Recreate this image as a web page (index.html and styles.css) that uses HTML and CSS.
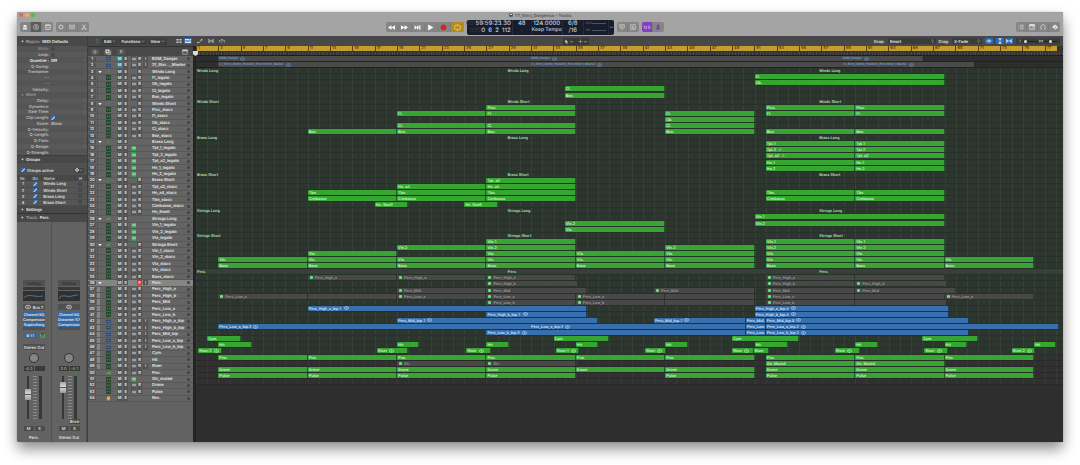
FILE: index.html
```html
<!DOCTYPE html>
<html lang="en">

<head>
    <meta charset="UTF-8">
    <meta name="viewport" content="width=device-width, initial-scale=1.0">
    <title>YT_Story_Dangerous - Tracks</title>
    <link rel="stylesheet" href="styles.css">
</head>

<body>
    <!-- icon set -->
    <svg class="sprite" aria-hidden="true">
        <symbol id="i-library" viewBox="0 0 12 12"><path d="M2 7h8v4H2zM3 2h6v4H3z" fill="currentColor"/></symbol>
        <symbol id="i-info" viewBox="0 0 12 12"><circle cx="6" cy="6" r="5" fill="none" stroke="currentColor"/><path d="M5 5h1.5v4M6 2.5v1" fill="none" stroke="currentColor" stroke-width="1.6"/></symbol>
        <symbol id="i-toolbar" viewBox="0 0 12 12"><path d="M1.5 1.5h9v9h-9zM1.5 3h9" fill="none" stroke="currentColor" stroke-width="1.4"/><path d="M4 6l2 2 2-2" fill="none" stroke="currentColor"/></symbol>
        <symbol id="i-smart" viewBox="0 0 12 12"><circle cx="6" cy="6" r="3.6" fill="none" stroke="currentColor" stroke-width="1.2"/><path d="M6 .5v2M6 9.5v2M.5 6h2M9.5 6h2M2 2l1.4 1.4M8.6 8.6L10 10M10 2L8.6 3.4M2 10l1.4-1.4" stroke="currentColor"/></symbol>
        <symbol id="i-mixer" viewBox="0 0 12 12"><path d="M2 1v10M6 1v10M10 1v10M.5 4h3M4.5 8h3M8.5 4h3" stroke="currentColor" stroke-width="1.2" fill="none"/></symbol>
        <symbol id="i-cut" viewBox="0 0 12 12"><path d="M3 1l5 8M9 1L4 9" stroke="currentColor" fill="none" stroke-width="1.3"/><circle cx="3" cy="10" r="1.5" fill="none" stroke="currentColor"/><circle cx="9" cy="10" r="1.5" fill="none" stroke="currentColor"/></symbol>
        <symbol id="i-rew" viewBox="0 0 12 12"><path d="M6 2v8L0 6zM12 2v8L6 6z" fill="currentColor"/></symbol>
        <symbol id="i-fwd" viewBox="0 0 12 12"><path d="M0 2v8l6-4zM6 2v8l6-4z" fill="currentColor"/></symbol>
        <symbol id="i-end" viewBox="0 0 12 12"><path d="M1 2v8l4-4zM5 2v8l4-4zM9 2h2v8H9z" fill="currentColor"/></symbol>
        <symbol id="i-play" viewBox="0 0 12 12"><path d="M2 1v10l9-5z" fill="currentColor"/></symbol>
        <symbol id="i-rec" viewBox="0 0 12 12"><circle cx="6" cy="6" r="5" fill="#cc2a22"/></symbol>
        <symbol id="i-cycle" viewBox="0 0 12 12"><path d="M7 2H4a3 3 0 0 0-3 3v2a3 3 0 0 0 2 2.8M5 10h3a3 3 0 0 0 3-3V5a3 3 0 0 0-2-2.8M6 .3L8 2 6 4M6 8l-2 2 2 2" fill="none" stroke="currentColor" stroke-width="1.2"/></symbol>
        <symbol id="i-shield" viewBox="0 0 12 12"><path d="M1.5 1.5h9V7L6 11 1.5 7z" fill="none" stroke="currentColor" stroke-width="1.2"/><path d="M4 4l4 3M8 4L4 7" stroke="currentColor"/></symbol>
        <symbol id="i-solo" viewBox="0 0 12 12"><path d="M1.5 1.5h9v9h-9zM5 4v4h3" fill="none" stroke="currentColor" stroke-width="1.2"/></symbol>
        <symbol id="i-count" viewBox="0 0 16 12"><path d="M1 5l2-1v5M5 5h3L5 9h3M10 4h2v5h-2M14 4v5" fill="none" stroke="currentColor" stroke-width="1.3"/></symbol>
        <symbol id="i-metro" viewBox="0 0 12 12"><path d="M4.5 1h3L10 11H2z" fill="currentColor"/><path d="M6 8l5-6" stroke="currentColor"/></symbol>
        <symbol id="i-list" viewBox="0 0 12 12"><path d="M1 2.5h1.5M4 2.5h7.5M1 6h1.5M4 6h7.5M1 9.5h1.5M4 9.5h7.5" stroke="currentColor" stroke-width="1.2"/></symbol>
        <symbol id="i-note" viewBox="0 0 12 12"><path d="M1.5 2.5h9v8h-9z" fill="none" stroke="currentColor" stroke-width="1.4"/><path d="M1 1h10v2.5H1zM6 8l4-4" fill="currentColor" stroke="currentColor"/></symbol>
        <symbol id="i-loop" viewBox="0 0 12 12"><path d="M3 10H1M11 10H9M4 10a4.5 4.5 0 1 1 4 0" fill="none" stroke="currentColor" stroke-width="1.4"/></symbol>
        <symbol id="i-media" viewBox="0 0 12 12"><path d="M1 5l5-4 5 4v4H8v2H5V8H1z" fill="currentColor"/><path d="M7 5v4" stroke="#777"/></symbol>
        <symbol id="i-doc" viewBox="0 0 12 12"><path d="M1 1h10v10H1z" fill="#2d4360"/><path d="M3 3h6v3H3z" fill="#dde6ee"/></symbol>
        <symbol id="i-up" viewBox="0 0 12 12"><path d="M3 5l3-3 3 3M6 2v8h3" fill="none" stroke="currentColor"/></symbol>
        <symbol id="i-grid" viewBox="0 0 12 12"><path d="M1 2h4v2H1zM7 2h4v2H7zM1 5h4v2H1zM7 5h4v2H7zM1 8h4v2H1zM7 8h4v2H7z" fill="currentColor"/></symbol>
        <symbol id="i-regions" viewBox="0 0 12 12"><path d="M0 2h8v2H0zM9 2h3v2H9zM0 5h4v2H0zM5 5h7v2H5zM0 8h12v2H0z" fill="currentColor"/></symbol>
        <symbol id="i-auto" viewBox="0 0 12 12"><path d="M1 9h4l3-5h3" fill="none" stroke="currentColor"/><circle cx="2" cy="9" r="1.5" fill="currentColor"/><circle cx="9" cy="3.5" r="1.5" fill="currentColor"/></symbol>
        <symbol id="i-flex" viewBox="0 0 12 12"><path d="M1 2v8M11 2v8M3 3l6 6M9 3L3 9M3 3v6M9 3v6" fill="none" stroke="currentColor"/></symbol>
        <symbol id="i-catch" viewBox="0 0 12 12"><path d="M1 9V5h3M11 9V5H8M6 10V2M4 4l2-2 2 2" fill="none" stroke="currentColor"/></symbol>
        <symbol id="i-pointer" viewBox="0 0 12 12"><path d="M3 1l7 6H7l2 4-2 1-2-4-2 2z" fill="currentColor"/></symbol>
        <symbol id="i-cross" viewBox="0 0 12 12"><path d="M6 1v10M1 6h10" stroke="currentColor"/></symbol>
        <symbol id="i-chev" viewBox="0 0 12 12"><path d="M3 5l3 3 3-3" fill="none" stroke="currentColor" stroke-width="1.5"/></symbol>
        <symbol id="i-updown" viewBox="0 0 8 12"><path d="M2 5l2-3 2 3M2 7l2 3 2-3" fill="none" stroke="currentColor"/></symbol>
        <symbol id="i-wave" viewBox="0 0 16 12"><path d="M1 6h14M4 4v4M6 2v8M8 1v10M10 2v8M12 4v4" stroke="currentColor" stroke-width="1.3"/></symbol>
        <symbol id="i-vert" viewBox="0 0 12 12"><path d="M3 1h6M3 11h6M6 2v8M4 4l2-2 2 2M4 8l2 2 2-2" fill="none" stroke="currentColor" stroke-width="1.4"/></symbol>
        <symbol id="i-horiz" viewBox="0 0 12 12"><path d="M1 2v8M11 2v8M2 6h8M4 4L2 6l2 2M8 4l2 2-2 2" fill="none" stroke="currentColor" stroke-width="1.4"/></symbol>
        <symbol id="i-dup" viewBox="0 0 12 12"><path d="M1 1h8v8H1z" fill="currentColor"/><path d="M4 11h7V4" fill="none" stroke="currentColor"/><path d="M5 3v4M3 5h4" stroke="#484848"/></symbol>
        <symbol id="i-config" viewBox="0 0 12 12"><path d="M1.5 2h9v8.5h-9z" fill="none" stroke="currentColor"/><path d="M1 1.5h10v3H1z" fill="currentColor"/></symbol>
        <symbol id="i-tri" viewBox="0 0 12 12"><path d="M1 3h10L6 10z" fill="currentColor"/></symbol>
        <symbol id="i-right" viewBox="0 0 12 12"><path d="M3 1l7 5-7 5z" fill="currentColor"/></symbol>
        <symbol id="i-stereo" viewBox="0 0 14 10"><rect x="1" y="1" width="12" height="8" rx="4" fill="none" stroke="currentColor" stroke-width="1.3"/><path d="M7 1v8M4.5 3v4M9.5 3v4" stroke="currentColor"/></symbol>
        <symbol id="i-midi" viewBox="0 0 16 16"><rect width="16" height="16" rx="2" fill="#26402c"/><path d="M4 3v10M12 3v10M5 8h6" stroke="#2f9443" stroke-width="2" fill="none"/></symbol>
        <symbol id="i-audio" viewBox="0 0 18 12"><rect width="18" height="12" rx="3" fill="#29496d"/><path d="M2 6h14M5 4v4M8 2v8M11 2v8M14 4v4" stroke="#4082c8" stroke-width="1.5"/></symbol>
        <symbol id="i-folder" viewBox="0 0 12 12"><path d="M2 11l6-7 2-2-1 4z" fill="#4aa546"/></symbol>
        <symbol id="i-strings" viewBox="0 0 12 12"><path d="M0 7h3V5h3V4h6v6H0z" fill="#47a83e"/></symbol>
        <symbol id="i-aux" viewBox="0 0 12 12"><path d="M3 1h6l1 5-2 5H4L2 6z" fill="#d9b92d"/></symbol>
        <symbol id="i-monitor" viewBox="0 0 12 12"><circle cx="6" cy="6" r="2" fill="currentColor"/><path d="M3 1v10M9 1v10M1 4v4M11 4v4" stroke="currentColor" stroke-width="1.6"/></symbol>
        <symbol id="i-gear" viewBox="0 0 12 12"><circle cx="6" cy="6" r="4" fill="none" stroke="currentColor" stroke-width="3"/></symbol>
    </svg>

    <main class="window">
        <header class="titlebar">
            <div class="caption">
                <div class="lights"><i class="close"></i><i class="min"></i><i class="max"></i></div>
                <h1 class="doc-title"><svg><use href="#i-doc"/></svg>YT_Story_Dangerous - Tracks</h1>
            </div>
            <div class="controlbar">
                <div class="bar-left">
                    <div class="btn-group">
                        <button class="tool" aria-label="Library"><svg><use href="#i-library"/></svg></button>
                        <button class="tool pressed" aria-label="Inspector"><svg><use href="#i-info"/></svg></button>
                        <button class="tool" aria-label="Toolbar"><svg><use href="#i-toolbar"/></svg></button>
                    </div>
                    <div class="btn-group">
                        <button class="tool" aria-label="Smart Controls"><svg><use href="#i-smart"/></svg></button>
                        <button class="tool" aria-label="Mixer"><svg><use href="#i-mixer"/></svg></button>
                        <button class="tool" aria-label="Editors"><svg><use href="#i-cut"/></svg></button>
                    </div>
                </div>
                <div class="bar-center">
                    <div class="btn-group transport">
                        <button class="tool" aria-label="Rewind"><svg><use href="#i-rew"/></svg></button>
                        <button class="tool" aria-label="Forward"><svg><use href="#i-fwd"/></svg></button>
                        <button class="tool" aria-label="Go to End"><svg><use href="#i-end"/></svg></button>
                        <button class="tool" aria-label="Play"><svg><use href="#i-play"/></svg></button>
                        <button class="tool" aria-label="Record"><svg><use href="#i-rec"/></svg></button>
                        <button class="tool cycle" aria-label="Cycle"><svg><use href="#i-cycle"/></svg></button>
                    </div>
                    <div class="lcd">
                        <div class="lcd-cell time"><span><b>00:</b>59:59:23.30</span><span><b>000</b>0&nbsp; 6 &nbsp;2 &nbsp;112</span></div>
                        <div class="lcd-cell"><span>48</span><span class="dim">---</span></div>
                        <div class="lcd-cell tempo"><span>124.0000</span><span class="small">Keep Tempo</span></div>
                        <div class="lcd-cell sign"><span>6/8</span><span>/16</span></div>
                        <div class="lcd-cell meters"><span class="dim">CPU <i></i></span><span class="dim">HD <i></i></span></div>
                        <svg class="lcd-more"><use href="#i-chev"/></svg>
                    </div>
                    <div class="btn-group">
                        <button class="tool" aria-label="Replace"><svg><use href="#i-shield"/></svg></button>
                        <button class="tool" aria-label="Solo"><svg><use href="#i-solo"/></svg></button>
                    </div>
                    <div class="btn-group">
                        <button class="tool purple" aria-label="Count In"><svg><use href="#i-count"/></svg></button>
                        <button class="tool metro" aria-label="Metronome"><svg><use href="#i-metro"/></svg></button>
                    </div>
                </div>
                <div class="bar-right">
                    <div class="btn-group">
                        <button class="tool" aria-label="List Editors"><svg><use href="#i-list"/></svg></button>
                        <button class="tool" aria-label="Note Pads"><svg><use href="#i-note"/></svg></button>
                        <button class="tool" aria-label="Loops"><svg><use href="#i-loop"/></svg></button>
                        <button class="tool" aria-label="Browsers"><svg><use href="#i-media"/></svg></button>
                    </div>
                </div>
            </div>
        </header>

        <div class="workspace">
            <aside class="inspector">
                <h2 class="panel-head tall"><svg><use href="#i-tri"/></svg><span>Region:</span> MIDI Defaults</h2>
                <div class="params">
                    <div class="param off"><label for="mute">Mute:</label><input type="checkbox" id="mute"></div>
                    <div class="param"><label for="loop">Loop:</label><input type="checkbox" id="loop"></div>
                    <div class="param strong"><span>Quantize :</span><b>Off</b><svg><use href="#i-updown"/></svg></div>
                    <div class="param"><span>Q-Swing:</span></div>
                    <div class="param"><span>Transpose:</span><b></b><svg><use href="#i-updown"/></svg></div>
                    <div class="param"><span>- -</span></div>
                    <div class="param"><span>- -</span></div>
                    <div class="param"><span>Velocity:</span></div>
                    <div class="param more"><svg><use href="#i-tri"/></svg>More</div>
                    <div class="param"><span>Delay:</span><b></b><svg><use href="#i-updown"/></svg></div>
                    <div class="param"><span>Dynamics:</span><b></b><svg><use href="#i-updown"/></svg></div>
                    <div class="param"><span>Gate Time:</span><b></b><svg><use href="#i-updown"/></svg></div>
                    <div class="param"><label for="clip">Clip Length:</label><input type="checkbox" id="clip" checked></div>
                    <div class="param"><span>Score:</span><b>Show</b></div>
                    <div class="param"><span>Q-Velocity:</span></div>
                    <div class="param"><span>Q-Length:</span></div>
                    <div class="param"><span>Q-Flam:</span><b></b><svg><use href="#i-updown"/></svg></div>
                    <div class="param"><span>Q-Range:</span><b></b><svg><use href="#i-updown"/></svg></div>
                    <div class="param"><span>Q-Strength:</span></div>
                </div>
                <h2 class="panel-head"><svg><use href="#i-tri"/></svg>Groups</h2>
                <div class="groups-active">
                    <input type="checkbox" id="groups" checked><label for="groups">Groups active</label>
                    <button class="gear" aria-label="Group options"><svg><use href="#i-gear"/></svg><svg><use href="#i-chev"/></svg></button>
                </div>
                <table class="groups">
                    <thead><tr><th>Nr.</th><th>On</th><th class="name">Name</th><th>H</th></tr></thead>
                    <tbody>
                        <tr><td>1</td><td><input type="checkbox" aria-label="Group 1 on" checked></td><td class="name">Winds Long</td><td><input type="checkbox" aria-label="Hide group 1"></td></tr>
                        <tr><td>2</td><td><input type="checkbox" aria-label="Group 2 on" checked></td><td class="name">Winds Short</td><td><input type="checkbox" aria-label="Hide group 2"></td></tr>
                        <tr><td>3</td><td><input type="checkbox" aria-label="Group 3 on" checked></td><td class="name">Brass Long</td><td><input type="checkbox" aria-label="Hide group 3"></td></tr>
                        <tr><td>4</td><td><input type="checkbox" aria-label="Group 4 on" checked></td><td class="name">Brass Short</td><td><input type="checkbox" aria-label="Hide group 4"></td></tr>
                    </tbody>
                </table>
                <h2 class="panel-head"><svg><use href="#i-right"/></svg>Settings</h2>
                <h2 class="panel-head track-head"><svg><use href="#i-right"/></svg><span>Track:</span> Perc.</h2>

                <div class="strips">
                    <section class="strip">
                        <button class="slot setting">Setting</button>
                        <div class="gain"></div>
                        <svg class="eq" viewBox="0 0 22 10" preserveAspectRatio="none"><path d="M1 7L3 5Q7 4 11 5T20 5" fill="none" stroke="#4b7494"/></svg>
                        <button class="slot input"><svg><use href="#i-stereo"/></svg>Bus 7</button>
                        <div class="inserts">
                            <button class="insert">Channel EQ</button>
                            <button class="insert bypass">Compressor</button>
                            <button class="insert">Supercharg</button>
                        </div>
                        <div class="send"><button class="insert">B 11</button><i class="send-knob"></i></div>
                        <button class="slot output">Stereo Out</button>
                        <div class="knob"></div>
                        <div class="readout"><span>-4.0</span><span></span></div>
                        <div class="fader"><input type="range" min="0" max="100" value="60" aria-label="Perc. volume"><i class="scale"></i><i class="meter"></i></div>
                        <div class="bounce"></div>
                        <div class="ms"><button>M</button><button>S</button></div>
                        <h3>Perc.</h3>
                    </section>
                    <section class="strip">
                        <button class="slot setting">Setting</button>
                        <div class="gain"></div>
                        <svg class="eq" viewBox="0 0 22 10" preserveAspectRatio="none"><path d="M1 8L3 5H8Q11 6 14 5T20 4" fill="none" stroke="#4b7494"/></svg>
                        <button class="slot input" aria-label="Input format"><svg><use href="#i-stereo"/></svg></button>
                        <div class="inserts">
                            <button class="insert">Channel EQ</button>
                            <button class="insert">Drawmer S7</button>
                            <button class="insert">Compressor</button>
                        </div>
                        <div class="send"></div>
                        <div class="output"></div>
                        <div class="knob"></div>
                        <div class="readout"><span>0.0</span><span class="peak">-6.2</span></div>
                        <div class="fader"><input type="range" min="0" max="100" value="80" aria-label="Stereo Out volume"><i class="scale"></i><i class="meter"></i></div>
                        <div class="bounce"><button>Bnce</button></div>
                        <div class="ms"><button>M</button><button>S</button></div>
                        <h3>Stereo Out</h3>
                    </section>
                </div>
            </aside>

            <section class="tracks">
                <nav class="menubar">
                    <div class="menus">
                        <button class="icon-btn faint" aria-label="Up"><svg><use href="#i-up"/></svg></button>
                        <button class="menu">Edit<svg><use href="#i-chev"/></svg></button>
                        <button class="menu">Functions<svg><use href="#i-chev"/></svg></button>
                        <button class="menu">View<svg><use href="#i-chev"/></svg></button>
                        <button class="icon-btn push" aria-label="Grid view"><svg><use href="#i-grid"/></svg></button>
                        <button class="icon-btn blue" aria-label="Region view"><svg><use href="#i-regions"/></svg></button>
                    </div>
                    <div class="modes">
                        <button class="icon-btn" aria-label="Automation"><svg><use href="#i-auto"/></svg></button>
                        <button class="icon-btn" aria-label="Flex"><svg><use href="#i-flex"/></svg></button>
                        <button class="icon-btn" aria-label="Catch"><svg><use href="#i-catch"/></svg></button>
                    </div>
                    <div class="pointers">
                        <button class="icon-btn" aria-label="Pointer tool"><svg><use href="#i-pointer"/></svg><svg><use href="#i-chev"/></svg></button>
                        <button class="icon-btn" aria-label="Marquee tool"><svg><use href="#i-cross"/></svg><svg><use href="#i-chev"/></svg></button>
                    </div>
                    <div class="snapping">
                        <label for="snap">Snap:</label>
                        <span class="drop wide"><select id="snap"><option>Smart</option></select><svg><use href="#i-updown"/></svg></span>
                        <label for="drag">Drag:</label>
                        <span class="drop"><select id="drag"><option>X-Fade</option></select><svg><use href="#i-updown"/></svg></span>
                        <button class="icon-btn blue" aria-label="Waveform zoom"><svg><use href="#i-wave"/></svg></button>
                        <div class="pair">
                            <button class="icon-btn blue" aria-label="Auto zoom vertical"><svg><use href="#i-vert"/></svg></button>
                            <button class="icon-btn blue" aria-label="Auto zoom horizontal"><svg><use href="#i-horiz"/></svg></button>
                        </div>
                        <div class="zooms">
                            <svg><use href="#i-updown"/></svg><input type="range" value="8" aria-label="Vertical zoom">
                            <svg><use href="#i-horiz"/></svg><input type="range" value="50" aria-label="Horizontal zoom">
                        </div>
                    </div>
                </nav>
                <div class="arrange">
                    <div class="headers">
                        <div class="header-tools">
                            <button class="icon-btn" aria-label="New track"><svg><use href="#i-cross"/></svg></button>
                            <button class="icon-btn" aria-label="Duplicate track"><svg><use href="#i-dup"/></svg></button>
                            <button class="icon-btn">S</button>
                            <button class="icon-btn push" aria-label="Track header options"><svg><use href="#i-config"/></svg></button>
                        </div>
                        <div class="track-list" id="trackList"></div>
                    </div>
                    <div class="timeline">
                        <div class="ruler"><div class="cycle-range" id="ruler"></div><div class="beats"></div></div>
                        <div class="lanes" id="lanes"></div>
                        <svg class="playhead" viewBox="0 0 6 6"><path d="M0 0h6v4L3 6 0 4z" fill="#dcdcdc"/></svg>
                    </div>
                </div>
            </section>
        </div>
    </main>

    <script src="app.js"></script>
</body>

</html>
```

FILE: styles.css
```css
:root {
    --bar: calc(100% / 77.6);
    --chrome: #a4a4a4;
    --panel: #626262;
    --dark: #484848;
    --green: #36a532;
    --blue: #386fad;
    --text: #e8e8e8;
}

* {
    box-sizing: border-box;
}

body {
    margin: 0;
    padding: 12px 17px 23px;
    height: 100vh;
    display: flex;
    background: #fff;
    color: var(--text);
    font: 500 4px/5px Inter, "Liberation Sans", sans-serif;
    text-rendering: geometricPrecision;
    overflow: hidden;
}

button,
input,
select {
    margin: 0;
    padding: 0;
    border: 0;
    color: inherit;
    font: inherit;
    text-rendering: inherit;
    background: none;
    appearance: none;
}

button {
    display: flex;
    align-items: center;
    justify-content: center;
    white-space: nowrap;
}

h1,
h2,
h3 {
    margin: 0;
    font: inherit;
}

svg {
    display: block;
    width: 6px;
    height: 6px;
    flex: none;
}

.sprite {
    position: absolute;
    width: 0;
    height: 0;
}

.window {
    flex: 1;
    min-width: 0;
    display: flex;
    flex-direction: column;
    border-radius: 2px;
    background: var(--panel);
    box-shadow: 0 7px 14px rgba(0, 0, 0, 0.45), 0 0 1px rgba(0, 0, 0, 0.5);
}

/* title bar and control bar */
.titlebar {
    height: 24px;
    flex: none;
    background: var(--chrome);
    border-radius: 2px 2px 0 0;
}

.caption {
    display: grid;
    grid-template-columns: 1fr auto 1fr;
    align-items: center;
    height: 6px;
}

.lights {
    display: flex;
    gap: 2px;
    padding-left: 2px;
}

.lights i {
    width: 4px;
    height: 4px;
    border-radius: 50%;
}

.close { background: #f55f56; }
.min { background: #f0b62f; }
.max { background: #43c240; }

.doc-title {
    display: flex;
    align-items: center;
    gap: 2px;
    color: #4b4b4b;
}

.doc-title svg {
    width: 4px;
    height: 4px;
}

.controlbar {
    display: flex;
    height: 18px;
    align-items: center;
}

.bar-left {
    flex: 12 1 0;
    display: flex;
    gap: 3px;
    padding-left: 3px;
}

.bar-center {
    display: flex;
    align-items: center;
    gap: 3px;
}

.bar-right {
    flex: 13 1 0;
    display: flex;
    justify-content: flex-end;
    padding-right: 3px;
}

.btn-group {
    display: flex;
    height: 10px;
    border-radius: 2px;
    background: #858585;
    overflow: hidden;
}

.tool {
    width: 11px;
    color: #e8e8e8;
    border-right: 1px solid #7c7c7c;
}

.tool:last-child {
    border-right: 0;
}

.tool.pressed {
    background: #5c5c5c;
}

.transport .tool {
    width: 13px;
    color: #fff;
}

.transport svg {
    width: 7px;
    height: 7px;
}

.transport .tool.cycle {
    background: #b58b1e;
    color: #f3dd8c;
}

.tool.purple {
    background: #8340bd;
    color: #d8b8f2;
}

.tool.purple svg {
    width: 8px;
}

.tool.metro {
    color: #7344a8;
}

.lcd {
    display: flex;
    width: 147px;
    height: 15px;
    border-radius: 2px;
    background: #191d2b;
    color: #bfd4e2;
    font-size: 6px;
    line-height: 7px;
    white-space: nowrap;
}

.lcd-cell {
    display: flex;
    flex-direction: column;
    justify-content: center;
    align-items: center;
    width: 19px;
    border-right: 1px solid #272c3c;
}

.lcd-cell.time {
    width: 46px;
    align-items: flex-end;
    padding-right: 1px;
}

.lcd b {
    font-weight: 500;
    color: #2f3546;
}

.lcd-cell.tempo {
    width: 31px;
}

.lcd-cell.sign {
    width: 21px;
}

.lcd-cell.meters {
    width: 25px;
    align-items: stretch;
    padding: 0 2px;
}

.lcd .small {
    font-size: 5px;
}

.lcd .dim {
    color: #66717f;
    font-size: 3px;
}

.meters .dim {
    display: flex;
    align-items: center;
    justify-content: space-between;
}

.meters i {
    width: 14px;
    height: 1px;
    background: #485468;
}

.lcd-more {
    width: 5px;
    align-self: center;
}

.workspace {
    flex: 1;
    min-height: 0;
    display: flex;
}

/* inspector */
.inspector {
    width: 71px;
    flex: none;
    display: flex;
    flex-direction: column;
    border-right: 1px solid #3d3d3d;
}

.panel-head {
    display: flex;
    align-items: center;
    gap: 2px;
    height: 7px;
    padding-left: 4px;
    background: var(--dark);
    font-weight: 600;
}

.panel-head svg {
    width: 3px;
    height: 3px;
}

.panel-head span {
    font-weight: 400;
    color: #c4c4c4;
}

.panel-head.tall {
    height: 10px;
}

.panel-head.track-head {
    height: 9px;
    border-top: 1px solid #333;
}

.params {
    display: grid;
    grid-auto-rows: 1fr;
    height: 110px;
    background: #545454;
    border-bottom: 1px solid #3c3c3c;
}

.param {
    display: grid;
    grid-template-columns: 32px 1fr 4px;
    gap: 2px;
    align-items: center;
    color: #c9c9c9;
}

.param:nth-child(even) {
    background: #595959;
}

.param > :first-child {
    text-align: right;
}

.param b {
    font-weight: 600;
}

.param svg {
    width: 3px;
    height: 4px;
    color: #939393;
}

.param.off {
    color: #8a8a8a;
}

.param.strong {
    color: #fff;
}

.param.more {
    display: flex;
    padding-left: 4px;
    color: #a5a5a5;
}

input[type="checkbox"] {
    width: 4px;
    height: 4px;
    display: block;
    border-radius: 1px;
    background: #484848;
}

input[type="checkbox"]:checked {
    background: linear-gradient(135deg, #276fc3 50%, #8dbdf2 50%, #8dbdf2 70%, #276fc3 70%);
}

.groups-active {
    display: flex;
    align-items: center;
    gap: 2px;
    height: 12px;
    padding: 2px 3px 0 4px;
    background: #505050;
}

.gear {
    margin-left: auto;
    width: 10px;
    height: 5px;
    border-radius: 1px;
    background: #424242;
}

.gear svg {
    width: 4px;
    height: 4px;
}

.groups {
    width: 100%;
    border-collapse: collapse;
    table-layout: fixed;
    background: #555;
}

.groups th,
.groups td {
    height: 6px;
    padding: 0;
    text-align: center;
    font-weight: 500;
}

.groups th {
    background: #484848;
    font-weight: 400;
    border-right: 1px solid #404040;
}

.groups .name {
    width: 33px;
    padding-left: 2px;
    text-align: left;
}

.groups tbody tr {
    border-bottom: 1px solid #4d4d4d;
}

.groups input {
    margin: 0 auto;
}

.strips {
    flex: 1;
    display: flex;
}

.strip {
    flex: 1;
    display: flex;
    flex-direction: column;
    justify-content: flex-end;
    align-items: center;
    padding-bottom: 2px;
    border-right: 1px solid #525252;
}

.slot {
    width: 22px;
    height: 6px;
    border-radius: 1px;
    background: #505050;
    gap: 2px;
}

.slot.setting {
    color: #2f2f2f;
}

.gain {
    width: 22px;
    height: 3px;
    margin-top: 1px;
    background: #383838;
}

.eq {
    width: 22px;
    height: 10px;
    margin: 1px 0 3px;
    background: #303030;
}

.inserts {
    display: grid;
    align-content: start;
    width: 22px;
    height: 18px;
    margin-top: 2px;
    background: #505050;
}

.insert {
    height: 5px;
    border-radius: 1px;
    background: #3567a3;
    font-family: Roboto, "Liberation Sans", sans-serif;
}

.insert.bypass {
    background: #565656;
}

.send {
    display: flex;
    align-items: center;
    justify-content: space-between;
    width: 22px;
    height: 5px;
    margin-top: 3px;
}

.send .insert {
    width: 15px;
}

.send-knob {
    width: 5px;
    height: 5px;
    border: 1px solid #4fb35b;
    border-top-color: #424242;
    border-radius: 50%;
}

.output {
    height: 6px;
    margin-top: 6px;
}

.knob {
    width: 10px;
    height: 10px;
    margin-top: 3px;
    border: 1px solid #333;
    border-radius: 50%;
    background: #858585;
}

.readout {
    display: flex;
    gap: 1px;
    margin-top: 3px;
}

.readout span {
    width: 10px;
    height: 5px;
    background: #393939;
    color: #aaa;
    text-align: center;
}

.readout .peak {
    color: #4fbd58;
}

.fader {
    display: flex;
    align-items: stretch;
    gap: 2px;
    width: 18px;
    height: 43px;
    margin-top: 5px;
}

.fader input {
    width: 6px;
    height: 43px;
    writing-mode: vertical-lr;
    direction: rtl;
    background: linear-gradient(#363636, #363636) center / 2px 100% no-repeat;
}

.fader input::-webkit-slider-thumb {
    appearance: none;
    width: 6px;
    height: 11px;
    border-radius: 1px;
    background: linear-gradient(#aaa, #d5d5d5 45%, #555 45%, #555 55%, #d0d0d0 55%, #999);
}

.scale {
    width: 4px;
    background: repeating-linear-gradient(#8a8a8a 0 1px, transparent 1px 3px);
}

.meter {
    width: 3px;
    background: #343a35;
}

.bounce {
    width: 22px;
    height: 5px;
    display: flex;
    justify-content: flex-end;
}

.bounce button {
    width: 11px;
    background: #484848;
}

.ms {
    display: flex;
    gap: 1px;
    margin-top: 2px;
}

.ms button {
    width: 10px;
    height: 5px;
    border-radius: 1px;
    background: #4b4b4b;
}

.strip h3 {
    margin-top: 4px;
    white-space: nowrap;
}

/* tracks area */
.tracks {
    flex: 1;
    min-width: 0;
    display: flex;
    flex-direction: column;
}

.menubar {
    display: flex;
    align-items: center;
    height: 10px;
    flex: none;
    background: var(--dark);
}

.menus {
    display: flex;
    align-items: center;
    gap: 1px;
    width: 105px;
    padding: 0 1px 0 5px;
}

.menu {
    height: 7px;
    gap: 1px;
    padding: 0 2px;
    border-radius: 1px;
    background: #3e3e3e;
    font-weight: 600;
}

.menu svg {
    width: 4px;
    height: 4px;
}

.icon-btn {
    min-width: 8px;
    height: 6px;
    border-radius: 1px;
    color: #d2d2d2;
}

.icon-btn.faint {
    color: #777;
}

.icon-btn.blue {
    background: #2f6bb5;
    color: #d9e8fa;
}

.push {
    margin-left: auto;
}

.modes {
    display: flex;
    gap: 3px;
    padding-left: 3px;
    flex: 7 1 0;
}

.pointers {
    display: flex;
    align-items: center;
    justify-content: space-around;
    gap: 2px;
    width: 26px;
    height: 7px;
    border-radius: 1px;
    background: #383838;
}

.pointers svg {
    width: 5px;
    height: 5px;
}

.snapping {
    display: flex;
    align-items: center;
    justify-content: flex-end;
    gap: 3px;
    flex: 9 1 0;
    padding-right: 3px;
}

.drop {
    display: flex;
    align-items: center;
    width: 30px;
    padding: 0 2px;
    border-radius: 1px;
    background: #3c3c3c;
}

.drop.wide {
    width: 48px;
}

.drop select {
    flex: 1;
    min-width: 0;
    height: 6px;
    font-weight: 600;
}

.drop svg {
    width: 3px;
}

.pair {
    display: flex;
    gap: 1px;
}

.zooms {
    display: flex;
    align-items: center;
    gap: 1px;
    width: 44px;
    height: 6px;
    padding: 0 2px;
    background: #3c3c3c;
}

.zooms svg {
    width: 4px;
    height: 4px;
}

.zooms input {
    flex: 1;
    min-width: 0;
    height: 4px;
    background: linear-gradient(#222, #222) center / 100% 1px no-repeat;
}

.zooms input::-webkit-slider-thumb {
    appearance: none;
    width: 3px;
    height: 3px;
    border-radius: 50%;
    background: #ddd;
}

.arrange {
    flex: 1;
    display: flex;
    min-height: 0;
}

.headers {
    width: 105px;
    flex: none;
}

.header-tools {
    display: flex;
    align-items: center;
    gap: 5px;
    height: 10px;
    padding: 0 4px 0 3px;
    background: var(--dark);
    border-top: 1px solid #333;
}

.header-tools .icon-btn {
    background: #555;
}

.track-list {
    display: grid;
    grid-auto-rows: 1fr;
    height: 346px;
}

.track {
    display: grid;
    grid-template-columns: 8px 7px 10px 4px 6px 6px 2px 6px 6px 6px 3px 1fr 6px;
    align-items: center;
    border-bottom: 1px solid #585858;
    background: #646464;
    min-height: 0;
    line-height: 4px;
}

.track.selected {
    background: #858585;
}

.track .num {
    text-align: center;
    background: #535353;
    font-weight: 600;
}

.track.child .indent {
    width: 3px;
    height: 100%;
    margin-left: 1px;
    border-left: 1px solid #555;
}

.track.perc .indent {
    border-left: 3px solid #858585;
}

.track .disclose svg {
    width: 4px;
    height: 4px;
    margin-left: 2px;
    color: #f2f2f2;
}

.track > svg {
    width: 5px;
    height: 5px;
    margin: 0 auto;
}

.track.folder > svg {
    width: 4px;
}

.track button {
    width: 5px;
    height: 5px;
    background: #515151;
    font-weight: 600;
}

.track button svg {
    width: 4px;
    height: 4px;
}

.track button.muted {
    background: #1e8e9b;
}

.track button.monitoring {
    background: #2ba347;
}

.track button.armed {
    background: #dd2c27;
}

.track .name {
    font-weight: 600;
    white-space: nowrap;
}

.track .dot {
    width: 3px;
    height: 3px;
    border-radius: 50%;
    background: #424242;
}

/* timeline */
.timeline {
    flex: 1;
    min-width: 0;
    position: relative;
    border-left: 3px solid #242424;
    background: #2e2e2e;
}

.playhead {
    position: absolute;
    left: -3px;
    top: 5px;
    width: 5px;
    height: 5px;
}

.ruler {
    height: 10px;
    background: #333;
    border-bottom: 1px solid #1d1d1d;
}

.cycle-range {
    display: grid;
    height: 5px;
    margin-right: 6px;
    background: #c39e2d;
}

.cycle-range span {
    grid-area: 1 / 1;
    width: 10px;
    padding-left: 1px;
    border-left: 1px solid #55430d;
    color: #3f310a;
    line-height: 4px;
}

.beats {
    height: 3px;
    margin-top: 1px;
    background: repeating-linear-gradient(90deg, #4a4a4a 0 1px, transparent 1px calc(var(--bar) / 4));
}

.lanes {
    display: grid;
    grid-auto-rows: 1fr;
    height: 329px;
}

.lane {
    display: grid;
    min-height: 0;
    background: repeating-linear-gradient(90deg, #38423a 0 1px, transparent 1px var(--bar)) #2c352e;
    border-bottom: 1px solid #273029;
}

.lane.audio {
    background: #2e2e2e;
    border-color: #222;
}

.lane.selected {
    background-color: #354038;
}

.lane.plain {
    background: repeating-linear-gradient(90deg, #393939 0 1px, transparent 1px var(--bar)) #303030;
    border-color: #292929;
}

.region {
    grid-area: 1 / 1;
    display: flex;
    align-items: center;
    gap: 2px;
    min-width: 0;
    height: 5px;
    padding-left: 1px;
    border-right: 1px solid #1f5c20;
    border-radius: 1px;
    background: var(--green);
    color: #d5f7d2;
    font-family: Roboto, "Liberation Sans", sans-serif;
    line-height: 5px;
    white-space: nowrap;
    overflow: hidden;
}

.region svg {
    width: 5px;
    height: 4px;
}

.region.wave {
    background: #4b4b4b;
    border-color: #222;
}

.region.bip {
    background: var(--blue);
    border-color: #1d3a5c;
    color: #d3e5fa;
}

.region.off {
    background: #484848;
    border-color: #303030;
    color: #999;
}

.region.off i {
    width: 3px;
    height: 3px;
    margin-left: 1px;
    border-radius: 1px;
    background: #62e477;
}

.region.label {
    background: none;
    border: 0;
}

.region.folder-name {
    color: #a2dfad;
    font-weight: 600;
}

.region.wave,
.region.on-wave {
    color: #6c9cd3;
    font-family: Inter, "Liberation Sans", sans-serif;
    font-size: 3px;
    font-weight: 600;
}

.region.on-bip {
    color: #d3e5fa;
}
```

FILE: app.js
```javascript
const TOTAL_BARS = 77.6;

// eight bar blocks used by most parts: a..i
const BLOCKS = { a: 3, b: 11, c: 19, d: 27, e: 35, f: 43, g: 52, h: 60, i: 68 };

const blocks = (name, keys, kind) =>
    [...keys].map(k => [name, BLOCKS[k], BLOCKS[k] + 8, kind]);

const labels = name => [1, 28.8, 56.7].map(bar => [name, bar, bar + 8, "label folder-name"]);

const MASTER = "31_Story_Battle_Passion_ProLimiter1_Master";

// type: audio, folder, midi, strings, aux   flags: M mute, m monitor, g monitor on, R rec, A armed, I input
const tracks = [
    ["BGM_Danger", "audio", "MmRI", [["BGM_Danger", 3, 66.2, "wave"], ["BGM_Danger", 30.9, 40, "label on-wave"], ["BGM_Danger", 58.8, 66, "label on-wave"]]],
    ["31_Stor..._Master", "audio", "MmRI", [[MASTER, 3, 70.7, "wave"], [MASTER, 30.9, 50, "label on-wave"], [MASTER, 58.8, 70.7, "label on-wave"]]],
    ["Winds Long", "folder", "R", labels("Winds Long")],
    ["Fl_legato", "midi", "mR", [["Fl.", 51, 68]]],
    ["Ob_legato", "midi", "mR", [["Ob.", 51, 68]]],
    ["Cl_legato", "midi", "mR", [["Cl.", 34, 43]]],
    ["Bsn_legato", "midi", "mR", [["Bsn.", 34, 43]]],
    ["Winds Short", "folder", "R", labels("Winds Short")],
    ["Picc_stacc", "midi", "mR", blocks("Picc.", "dgh")],
    ["Fl_stacc", "midi", "mR", blocks("Fl.", "cdfgh")],
    ["Ob_stacc", "midi", "mR", blocks("Ob.", "f")],
    ["Cl_stacc", "midi", "mR", blocks("Cl.", "cdf")],
    ["Bsn_stacc", "midi", "mR", blocks("Bsn.", "bcdfgh")],
    ["Brass Long", "folder", "", labels("Brass Long")],
    ["Tpt_1_legato", "midi", "g", blocks("Tpt.1", "gh")],
    ["Tpt_2_legato", "midi", "g", [["Tpt.2 &nbsp;↗", 52, 60], ["Tpt.2", 60, 68]]],
    ["Tpt_a2_legato", "midi", "g", [["Tpt. a2 &nbsp;↗", 52, 60], ["Tpt. a2", 60, 68]]],
    ["Hn_1_legato", "midi", "g", blocks("Hn.1", "gh")],
    ["Hn_2_legato", "midi", "g", blocks("Hn.2", "gh")],
    ["Brass Short", "folder", "R", labels("Brass Short")],
    ["Tpt_a2_stacc", "midi", "mR", blocks("Tpt. a2", "d")],
    ["Hn_a4_stacc", "midi", "mR", blocks("Hn. a4", "cd")],
    ["Tbn_stacc", "midi", "mR", blocks("Tbn.", "bcdgh")],
    ["Cimbasso_stacc", "midi", "mR", blocks("Cimbasso", "bcdgh")],
    ["Hn_Swell", "midi", "mR", [["Hn. Swell", 17, 20], ["Hn. Swell", 25, 28]]],
    ["Strings Long", "strings folder", "", labels("Strings Long")],
    ["Vln_1_legato", "midi", "g", [["Vln.1", 51, 68]]],
    ["Vln_2_legato", "midi", "g", [["Vln.2", 34, 43], ["Vln.2", 51, 68]]],
    ["Vla_legato", "midi", "g", [["Vla.", 34, 43]]],
    ["Strings Short", "strings folder", "R", labels("Strings Short")],
    ["Vln_1_stacc", "midi", "mR", blocks("Vln.1", "dgh")],
    ["Vln_2_stacc", "midi", "mR", blocks("Vln.2", "cdfgh")],
    ["Vla_stacc", "midi", "mR", blocks("Vla.", "bdefgh")],
    ["Vlc_stacc", "midi", "mR", blocks("Vlc.", "abcdefghi")],
    ["Bass_stacc", "midi", "mR", blocks("Bass", "abcdefghi")],
    ["Perc.", "folder selected", "AI", labels("Perc.")],
    ["Perc_High_a", "midi", "mR", [...blocks("Perc_High_a", "bcdg", "off"), ["", 60, 68, "off"]]],
    ["Perc_High_b", "midi", "mR", [["Perc_High_b", 27, 35.2, "off"], ["Perc_High_b", 52, 60, "off"], ["Perc_High_b", 60, 68.2, "off"]]],
    ["Perc_Mid", "midi", "mR", [["Perc_Mid", 19, 27, "off"], ["Perc_Mid", 27, 36, "off"], ["Perc_Mid", 42, 51, "off"], ["Perc_Mid", 52, 60, "off"], ["Perc_Mid", 60, 69, "off"]]],
    ["Perc_Low_a", "midi", "mR", [...blocks("Perc_Low_a", "acdegi", "off"), ...blocks("", "bfh", "off")]],
    ["Perc_Low_b", "midi", "mR", [...blocks("Perc_Low_b", "deg", "off"), ["", 43, 51, "off"], ["", 60, 68.2, "off"]]],
    ["Perc_High_a_bip", "audio", "mRI", [["Perc_High_a_bip.1", 11, 36, "bip"], ["Perc_High_a_bip.4", 51, 68.4, "bip"]]],
    ["Perc_High_b_bip", "audio", "mRI", [["Perc_High_b_bip.1", 27, 36, "bip"], ["Perc_High_b_bip.4", 51, 68.4, "bip"]]],
    ["Perc_Mid_bip", "audio", "mRI", [["Perc_Mid_bip.1", 19, 37, "bip"], ["Perc_Mid_bip.7", 42, 50.2, "bip"], ["Perc_Mid.", 50.2, 52, "bip"], ["Perc_Mid_bip.8", 52, 70.2, "bip"]]],
    ["Perc_Low_a_bip", "audio", "mRI", [["Perc_Low_a_bip.3", 3, 50.2, "bip"], ["Perc_Low_a_bip.3", 30.9, 42, "label on-bip"], ["Perc_Low.", 50.2, 52, "bip"], ["Perc_Low_a_bip.2", 52, 78.2, "bip"]]],
    ["Perc_Low_b_bip", "audio", "mRI", [["Perc_Low_b_bip.3", 27, 50.2, "bip"], ["Perc_Low.", 50.2, 52, "bip"], ["Perc_Low_b_bip.2", 52, 70.2, "bip"]]],
    ["Cym.", "midi", "mR", [["Cym.", 2, 5], ["Cym.", 33, 38], ["Cym.", 49, 55], ["Cym.", 66, 71]]],
    ["Hit", "midi", "mR", [["Hit", 3, 6], ["Hit", 19, 21], ["Hit", 27, 29], ["Hit", 35, 37], ["Hit", 43, 45], ["Hit", 51, 54], ["Hit", 60, 62], ["Hit", 68, 70], ["Hit", 76, 78]]],
    ["Riser", "midi", "mRI", [["Riser.2", 1.2, 3.3, "stereo"], ["Riser", 17.2, 20, "stereo"], ["Riser", 25.2, 27.4, "stereo"], ["Riser.1", 33.2, 35.3, "stereo"], ["Riser", 41.2, 43.1, "stereo"], ["Riser", 49, 50.9, "stereo"], ["Riser", 50.9, 52.3], ["Riser", 58.2, 60.4, "stereo"], ["Riser", 66.2, 68.3, "stereo"], ["Riser.2", 74, 76.1, "stereo"]]],
    ["Pno.", "strings", "mR", blocks("Pno.", "abcdefghi")],
    ["Gtr_muted", "midi", "g", [...blocks("Gtr.", "cd", "off"), ...blocks("Gtr. Muted", "gh")]],
    ["Drone", "midi", "mR", blocks("Drone", "abcdefghi")],
    ["Pulse", "midi", "mR", blocks("Pulse", "abcdfghi")],
    ["Rev.", "aux", "", []],
];

const icon = id => `<svg aria-hidden="true"><use href="#i-${id}"/></svg>`;
const percent = bars => (bars / TOTAL_BARS * 100).toFixed(3) + "%";

function headerRow([name, type, flags], index) {
    const n = index + 1;
    const folder = type.includes("folder");
    const has = f => flags.includes(f);
    const kind = type.includes("strings") ? "strings" : type.split(" ")[0];
    const classes = ["track"];
    if (folder) classes.push("folder");
    if (type.includes("selected")) classes.push("selected");
    if (!folder && n > 3 && n < 50) classes.push("child");
    if (n > 36 && n < 50) classes.push("perc");

    const monitor = has("g") ? `<button class="monitoring" aria-label="Input monitoring">${icon("monitor")}</button>`
        : has("m") ? `<button aria-label="Input monitoring">${icon("monitor")}</button>` : "<span></span>";
    const rec = has("A") ? `<button class="armed">R</button>` : has("R") ? "<button>R</button>" : "<span></span>";

    return `<div class="${classes.join(" ")}">
        <span class="num">${n}</span>
        <span class="${folder ? "disclose" : "indent"}">${folder ? icon("tri") : ""}</span>
        ${icon(kind)}<span></span>
        <button class="${has("M") ? "muted" : ""}">M</button><button>S</button><span></span>
        ${monitor}${rec}${has("I") ? "<button>I</button>" : "<span></span>"}<span></span>
        <span class="name">${name}</span><span class="dot"></span>
    </div>`;
}

function region([name, start, end, kind = ""]) {
    const dot = kind === "off" && name ? "<i></i>" : "";
    const stereo = /wave|bip|stereo/.test(kind) && !name.endsWith(".") ? icon("stereo") : "";
    return `<div class="region ${kind}" style="margin-left:${percent(start - 1)};width:${percent(end - start)}">${dot}<span>${name}</span>${stereo}</div>`;
}

function lane([, type, , regions], index) {
    let cls = "lane";
    if (index < 2) cls += " audio";
    if (index > 48) cls += " plain";
    if (type.includes("selected")) cls += " selected";
    return `<div class="${cls}">${regions.map(region).join("")}</div>`;
}

document.getElementById("trackList").innerHTML = tracks.map(headerRow).join("");
document.getElementById("lanes").innerHTML = tracks.map(lane).join("");

// the cycle range covers bars 1 to 78
let marks = "";
for (let bar = 1; bar < 78; bar += 2) {
    marks += `<span style="margin-left:${((bar - 1) / 77.1 * 100).toFixed(3)}%">${bar}</span>`;
}
document.getElementById("ruler").innerHTML = marks;
```
